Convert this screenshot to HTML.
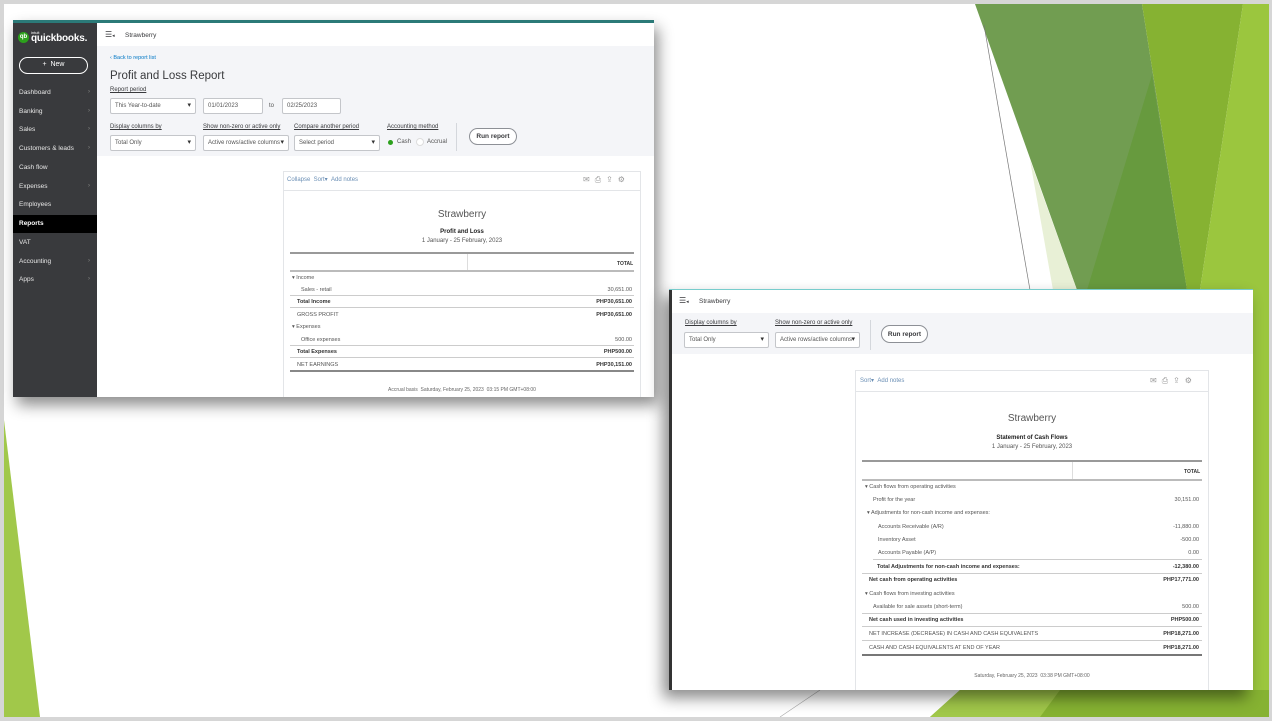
<!DOCTYPE html>
<html><head><meta charset="utf-8"><style>
*{margin:0;padding:0;box-sizing:border-box}
body{width:1272px;height:721px;background:#d6d6d6;position:relative;overflow:hidden;font-family:"Liberation Sans",sans-serif;color:#393a3d}
.a{position:absolute;white-space:nowrap}
.t{font-size:6px;color:#555}
.lb{font-size:6px;color:#393a3d;text-decoration:underline}
.dd{position:absolute;background:#fff;border:1px solid #c4c6ca;border-radius:2px;font-size:6px;color:#555;padding:0 4px;height:16px;line-height:14px}
.dd.c:after{content:"▾";position:absolute;right:4px;top:0;font-size:7px;color:#333}
.btn{position:absolute;border:1px solid #8d9096;border-radius:10px;background:#fff;font-size:6.5px;font-weight:bold;color:#393a3d;display:flex;align-items:center;justify-content:center}
.row{position:absolute;font-size:5.5px;color:#555;height:12px}
.row .v{position:absolute;right:0}
.b{font-weight:bold;color:#333}
.nav{position:absolute;left:19px;font-size:6.5px;color:#e8e8e8}
.nav i{position:absolute;left:69px;font-style:normal;color:#888;font-size:6px}
</style></head><body>
<div class="a" style="left:4px;top:4px;width:1265px;height:713px;background:#fff"></div>
<svg class="a" style="left:0;top:0" width="1272" height="721">
<polygon points="4,420 4,717 40,717" fill="#a1c84a"/>
<polygon points="975,4 1142,4 1187,290 1077,290" fill="#719d51"/>
<polygon points="1152,75 1187,290 1087,290" fill="#679a3e"/>
<polygon points="1142,4 1243,4 1200,290 1187,290" fill="#86b232"/>
<polygon points="1243,4 1269,4 1269,717 1200,717 1200,290" fill="#9bc63e"/>
<polygon points="1030,160 1077,290 1053,290" fill="#e8f0d6"/>
<line x1="984" y1="25" x2="1030" y2="290" stroke="#777" stroke-width="0.7"/>
<polygon points="930,717 1269,717 1269,690 960,690" fill="#86b232"/>
<polygon points="930,717 1040,717 1060,690 960,690" fill="#a1c84a"/>
<line x1="780" y1="717" x2="820" y2="690" stroke="#aaa" stroke-width="0.6"/>
</svg>

<!-- LEFT WINDOW -->
<div class="a" style="left:13px;top:20px;width:641px;height:377px;background:#fff;box-shadow:4px 8px 14px rgba(0,0,0,.45)"></div>
<div class="a" style="left:13px;top:20px;width:641px;height:3px;background:#2b7a78"></div>
<div class="a" style="left:13px;top:23px;width:84px;height:374px;background:#393a3d"></div>
<div class="a" style="left:18px;top:32px;width:11px;height:11px;border-radius:50%;background:#2ca01c;color:#fff;font-size:6px;font-weight:bold;text-align:center;line-height:11px">qb</div>
<div class="a" style="left:31px;top:30px;font-size:4px;color:#fff">intuit</div>
<div class="a" style="left:31px;top:33px;font-size:10px;color:#fff;font-weight:bold;letter-spacing:-.2px">quickbooks.</div>
<div class="a" style="left:19px;top:57px;width:69px;height:17px;border:1.5px solid #fff;border-radius:9px;color:#fff;font-size:7px;text-align:center;line-height:14px">+ &nbsp;New</div>
<div class="a" style="left:13px;top:215px;width:84px;height:18px;background:#000"></div>
<div class="nav" style="top:89px">Dashboard<i>›</i></div>
<div class="nav" style="top:108px">Banking<i>›</i></div>
<div class="nav" style="top:126px">Sales<i>›</i></div>
<div class="nav" style="top:145px">Customers &amp; leads<i>›</i></div>
<div class="nav" style="top:164px">Cash flow</div>
<div class="nav" style="top:183px">Expenses<i>›</i></div>
<div class="nav" style="top:201px">Employees</div>
<div class="nav" style="top:220px;color:#fff;font-weight:bold">Reports</div>
<div class="nav" style="top:239px">VAT</div>
<div class="nav" style="top:258px">Accounting<i>›</i></div>
<div class="nav" style="top:276px">Apps<i>›</i></div>
<div class="a" style="left:105px;top:30px;font-size:8px;color:#393a3d">☰<span style="font-size:5px">◂</span></div>
<div class="a" style="left:125px;top:32px;font-size:6.5px">Strawberry</div>
<div class="a" style="left:97px;top:46px;width:557px;height:110px;background:#f4f5f8"></div>
<div class="a" style="left:110px;top:55px;font-size:5.5px;color:#0077c5">‹ Back to report list</div>
<div class="a" style="left:110px;top:70px;font-size:11.5px;color:#393a3d">Profit and Loss Report</div>
<div class="a lb" style="left:110px;top:87px">Report period</div>
<div class="dd c" style="left:110px;top:98px;width:86px">This Year-to-date</div>
<div class="dd" style="left:203px;top:98px;width:60px">01/01/2023</div>
<div class="a t" style="left:269px;top:103px">to</div>
<div class="dd" style="left:282px;top:98px;width:59px">02/25/2023</div>
<div class="a lb" style="left:110px;top:124px">Display columns by</div>
<div class="a lb" style="left:203px;top:124px">Show non-zero or active only</div>
<div class="a lb" style="left:294px;top:124px">Compare another period</div>
<div class="a lb" style="left:387px;top:124px">Accounting method</div>
<div class="dd c" style="left:110px;top:135px;width:86px">Total Only</div>
<div class="dd c" style="left:203px;top:135px;width:86px">Active rows/active columns</div>
<div class="dd c" style="left:294px;top:135px;width:86px">Select period</div>
<div class="a" style="left:388px;top:140px;width:5px;height:5px;border-radius:50%;background:#2ca01c"></div>
<div class="a t" style="left:397px;top:139px">Cash</div>
<div class="a" style="left:416px;top:138px;width:8px;height:8px;border-radius:50%;background:#fff;border:1px solid #ddd"></div>
<div class="a t" style="left:427px;top:139px">Accrual</div>
<div class="a" style="left:456px;top:123px;width:1px;height:28px;background:#d4d7dc"></div>
<div class="btn" style="left:469px;top:128px;width:48px;height:17px">Run report</div>
<div class="a" style="left:283px;top:171px;width:358px;height:226px;border:1px solid #e3e5e8;border-bottom:none"></div>
<div class="a" style="left:283px;top:190px;width:358px;height:1px;background:#e3e5e8"></div>
<div class="a" style="left:287px;top:176px;font-size:6px;color:#6b8fb5">Collapse &nbsp;Sort▾ &nbsp;Add notes</div>
<div class="a" style="left:583px;top:175px;font-size:8px;color:#999;letter-spacing:5px">✉⎙⇪⚙</div>
<div class="a" style="left:283px;top:209px;width:358px;text-align:center;font-size:10px;color:#555">Strawberry</div>
<div class="a" style="left:283px;top:229px;width:358px;text-align:center;font-size:6px;font-weight:bold;color:#222">Profit and Loss</div>
<div class="a" style="left:283px;top:238px;width:358px;text-align:center;font-size:6px;color:#555">1 January - 25 February, 2023</div>
<div class="a" style="left:290px;top:252px;width:344px;height:2px;background:#999"></div>
<div class="a" style="left:467px;top:254px;width:1px;height:16px;background:#ddd"></div>
<div class="a b" style="left:617px;top:261px;font-size:5px">TOTAL</div>
<div class="a" style="left:290px;top:270px;width:344px;height:2px;background:#bbb"></div>
<div class="row" style="left:292px;top:275px;width:340px">▾ Income</div>
<div class="row" style="left:301px;top:287px;width:331px">Sales - retail<span class="v">30,651.00</span></div>
<div class="a" style="left:290px;top:295px;width:344px;height:1px;background:#ccc"></div>
<div class="row b" style="left:297px;top:299px;width:335px">Total Income<span class="v">PHP30,651.00</span></div>
<div class="a" style="left:290px;top:307px;width:344px;height:1px;background:#ccc"></div>
<div class="row" style="left:297px;top:312px;width:335px">GROSS PROFIT<span class="v b">PHP30,651.00</span></div>
<div class="row" style="left:292px;top:324px;width:340px">▾ Expenses</div>
<div class="row" style="left:301px;top:337px;width:331px">Office expenses<span class="v">500.00</span></div>
<div class="a" style="left:290px;top:345px;width:344px;height:1px;background:#ccc"></div>
<div class="row b" style="left:297px;top:349px;width:335px">Total Expenses<span class="v">PHP500.00</span></div>
<div class="a" style="left:290px;top:357px;width:344px;height:1px;background:#ccc"></div>
<div class="row" style="left:297px;top:362px;width:335px">NET EARNINGS<span class="v b">PHP30,151.00</span></div>
<div class="a" style="left:290px;top:370px;width:344px;height:2px;background:#888"></div>
<div class="a" style="left:283px;top:387px;width:358px;text-align:center;font-size:5px;color:#666">Accrual basis &nbsp;Saturday, February 25, 2023 &nbsp;03:15 PM GMT+08:00</div>

<!-- RIGHT WINDOW -->
<div class="a" style="left:669px;top:289px;width:584px;height:401px;background:#fff;box-shadow:-6px 8px 14px rgba(0,0,0,.45)"></div>
<div class="a" style="left:669px;top:289px;width:584px;height:1px;background:#7cc"></div>
<div class="a" style="left:669px;top:290px;width:3px;height:400px;background:#333"></div>
<div class="a" style="left:679px;top:296px;font-size:8px">☰<span style="font-size:5px">◂</span></div>
<div class="a" style="left:699px;top:298px;font-size:6.5px">Strawberry</div>
<div class="a" style="left:672px;top:313px;width:581px;height:41px;background:#f4f5f8"></div>
<div class="a lb" style="left:685px;top:320px">Display columns by</div>
<div class="a lb" style="left:775px;top:320px">Show non-zero or active only</div>
<div class="dd c" style="left:684px;top:332px;width:85px">Total Only</div>
<div class="dd c" style="left:775px;top:332px;width:85px">Active rows/active columns</div>
<div class="a" style="left:870px;top:320px;width:1px;height:30px;background:#d4d7dc"></div>
<div class="btn" style="left:881px;top:325px;width:47px;height:18px">Run report</div>
<div class="a" style="left:855px;top:370px;width:354px;height:320px;border:1px solid #e3e5e8;border-bottom:none"></div>
<div class="a" style="left:855px;top:391px;width:354px;height:1px;background:#e3e5e8"></div>
<div class="a" style="left:860px;top:377px;font-size:6px;color:#6b8fb5">Sort▾ &nbsp;Add notes</div>
<div class="a" style="left:1150px;top:376px;font-size:8px;color:#999;letter-spacing:5px">✉⎙⇪⚙</div>
<div class="a" style="left:855px;top:413px;width:354px;text-align:center;font-size:10px;color:#555">Strawberry</div>
<div class="a" style="left:855px;top:435px;width:354px;text-align:center;font-size:6px;font-weight:bold;color:#222">Statement of Cash Flows</div>
<div class="a" style="left:855px;top:444px;width:354px;text-align:center;font-size:6px;color:#555">1 January - 25 February, 2023</div>
<div class="a" style="left:862px;top:460px;width:340px;height:2px;background:#999"></div>
<div class="a" style="left:1072px;top:462px;width:1px;height:17px;background:#ddd"></div>
<div class="a b" style="left:1184px;top:469px;font-size:5px">TOTAL</div>
<div class="a" style="left:862px;top:479px;width:340px;height:2px;background:#bbb"></div>
<div class="row" style="left:865px;top:484px;width:335px">▾ Cash flows from operating activities</div>
<div class="row" style="left:873px;top:497px;width:326px">Profit for the year<span class="v">30,151.00</span></div>
<div class="row" style="left:867px;top:510px;width:332px">▾ Adjustments for non-cash income and expenses:</div>
<div class="row" style="left:878px;top:524px;width:321px">Accounts Receivable (A/R)<span class="v">-11,880.00</span></div>
<div class="row" style="left:878px;top:537px;width:321px">Inventory Asset<span class="v">-500.00</span></div>
<div class="row" style="left:878px;top:550px;width:321px">Accounts Payable (A/P)<span class="v">0.00</span></div>
<div class="a" style="left:873px;top:559px;width:329px;height:1px;background:#ccc"></div>
<div class="row b" style="left:877px;top:564px;width:322px">Total Adjustments for non-cash income and expenses:<span class="v">-12,380.00</span></div>
<div class="a" style="left:862px;top:573px;width:340px;height:1px;background:#ccc"></div>
<div class="row b" style="left:869px;top:577px;width:330px">Net cash from operating activities<span class="v">PHP17,771.00</span></div>
<div class="row" style="left:865px;top:591px;width:334px">▾ Cash flows from investing activities</div>
<div class="row" style="left:873px;top:604px;width:326px">Available for sale assets (short-term)<span class="v">500.00</span></div>
<div class="a" style="left:862px;top:613px;width:340px;height:1px;background:#ccc"></div>
<div class="row b" style="left:869px;top:617px;width:330px">Net cash used in investing activities<span class="v">PHP500.00</span></div>
<div class="a" style="left:862px;top:626px;width:340px;height:1px;background:#ccc"></div>
<div class="row" style="left:869px;top:631px;width:330px">NET INCREASE (DECREASE) IN CASH AND CASH EQUIVALENTS<span class="v b">PHP18,271.00</span></div>
<div class="a" style="left:862px;top:640px;width:340px;height:1px;background:#ccc"></div>
<div class="row" style="left:869px;top:645px;width:330px">CASH AND CASH EQUIVALENTS AT END OF YEAR<span class="v b">PHP18,271.00</span></div>
<div class="a" style="left:862px;top:654px;width:340px;height:2px;background:#777"></div>
<div class="a" style="left:855px;top:673px;width:354px;text-align:center;font-size:5px;color:#666">Saturday, February 25, 2023 &nbsp;03:38 PM GMT+08:00</div>
</body></html>
